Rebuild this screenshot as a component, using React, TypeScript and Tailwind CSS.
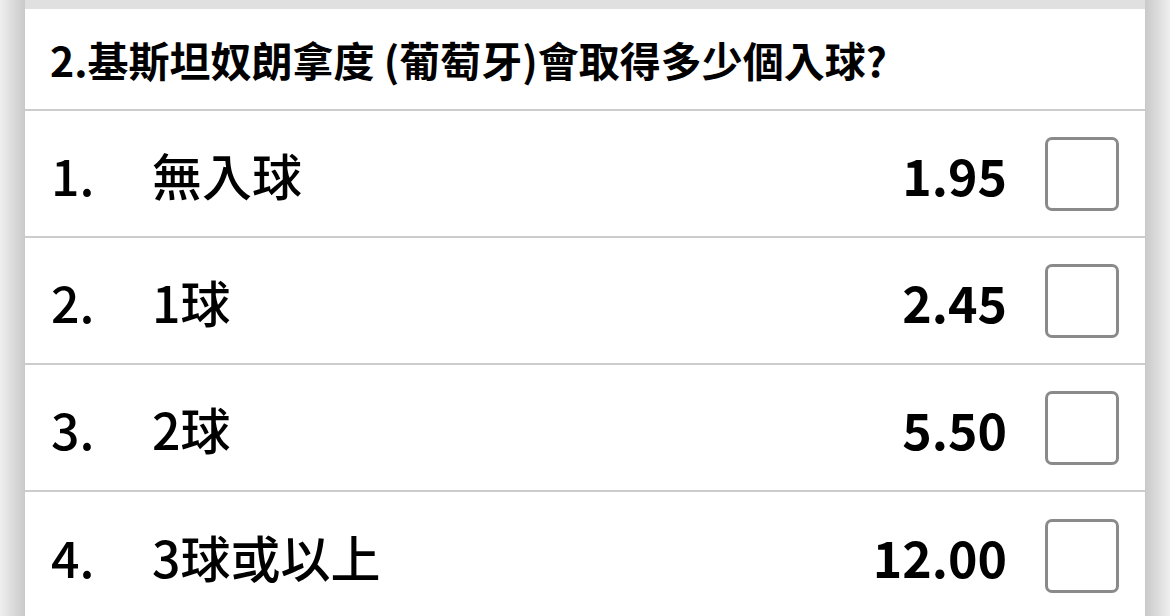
import React from 'react';

const options = [
  { no: '1.', label: '無入球', odds: '1.95' },
  { no: '2.', label: '1球', odds: '2.45' },
  { no: '3.', label: '2球', odds: '5.50' },
  { no: '4.', label: '3球或以上', odds: '12.00' },
];

const App = () => {
  return (
    <div
      className="h-[616px] w-[1170px] overflow-hidden flex bg-white text-black"
      style={{ fontFamily: '"Noto Sans CJK TC", "Noto Sans", sans-serif' }}
    >
      {/* left gutter */}
      <div className="w-[25px] shrink-0 bg-gradient-to-r from-[#efefef] to-[#c9c9c9]" />

      <div className="flex-1 flex flex-col">
        <div className="h-[9px] shrink-0 bg-[#e0e0e0]" />
        <div className="h-[102px] shrink-0 flex items-center px-[25px] border-b-2 border-[#cccccc]">
          <p className="text-[41px] font-bold leading-none">2.基斯坦奴朗拿度 (葡萄牙)會取得多少個入球?</p>
        </div>
        {options.map((o, i) => (
          <div
            key={o.no}
            className={`h-[127px] shrink-0 flex items-center pl-[26px] pr-[26px] ${i < options.length - 1 ? 'border-b-2 border-[#cccccc]' : ''}`}
          >
            <span className="w-[101px] text-[50px] font-medium leading-none">{o.no}</span>
            <span className="flex-1 text-[50px] font-medium leading-none">{o.label}</span>
            <span className="text-[50px] font-bold leading-none">{o.odds}</span>
            <div className="ml-[38px] w-[74px] h-[74px] rounded-[7px] border-[3px] border-[#8a8a8a]" />
          </div>
        ))}
      </div>

      {/* right gutter */}
      <div className="w-[25px] shrink-0 bg-gradient-to-r from-[#c9c9c9] to-[#efefef]" />
    </div>
  );
};

export default App;
